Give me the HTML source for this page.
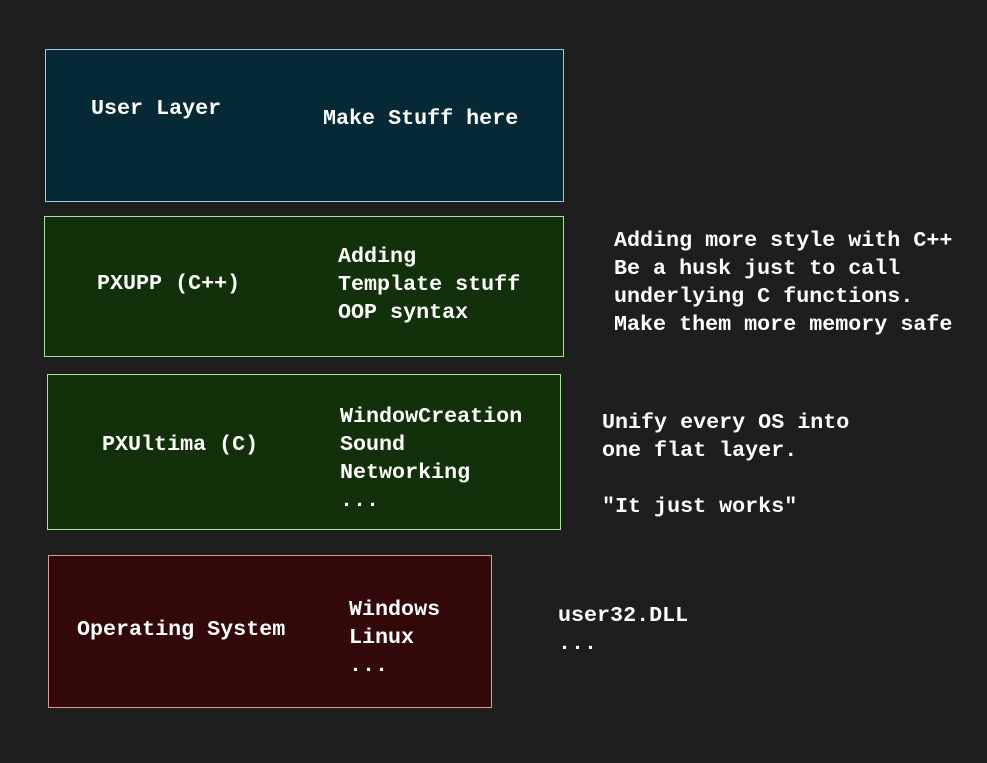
<!DOCTYPE html>
<html><head><meta charset="utf-8"><style>
html,body{margin:0;padding:0;background:#1e1e1e;width:987px;height:763px;overflow:hidden}
body{position:relative;font-family:"Liberation Mono",monospace;font-weight:bold;font-size:21.7px;color:#fff}
.b{position:absolute;box-sizing:border-box}
.t{position:absolute;line-height:28px;white-space:pre}
</style></head><body>
<div class="b" style="left:45px;top:49px;width:519px;height:153px;background:#052a36;border:1px solid #a0c8e8"></div>
<div class="b" style="left:44px;top:216px;width:520px;height:141px;background:#12300a;border:1px solid #a8e0a0"></div>
<div class="b" style="left:47px;top:374px;width:514px;height:156px;background:#12300a;border:1px solid #a8e0a0"></div>
<div class="b" style="left:48px;top:555px;width:444px;height:153px;background:#330808;border:1px solid #e09a9a"></div>

<div class="t" style="left:91px;top:95px">User Layer</div>
<div class="t" style="left:323px;top:105px">Make Stuff here</div>

<div class="t" style="left:97px;top:270px">PXUPP (C++)</div>
<div class="t" style="left:338px;top:243px">Adding
Template stuff
OOP syntax</div>
<div class="t" style="left:614px;top:227px">Adding more style with C++
Be a husk just to call
underlying C functions.
Make them more memory safe</div>

<div class="t" style="left:102px;top:431px">PXUltima (C)</div>
<div class="t" style="left:340px;top:403px">WindowCreation
Sound
Networking
...</div>
<div class="t" style="left:602px;top:409px">Unify every OS into
one flat layer.

"It just works"</div>

<div class="t" style="left:77px;top:616px">Operating System</div>
<div class="t" style="left:349px;top:596px">Windows
Linux
...</div>
<div class="t" style="left:558px;top:602px">user32.DLL
...</div>
</body></html>
